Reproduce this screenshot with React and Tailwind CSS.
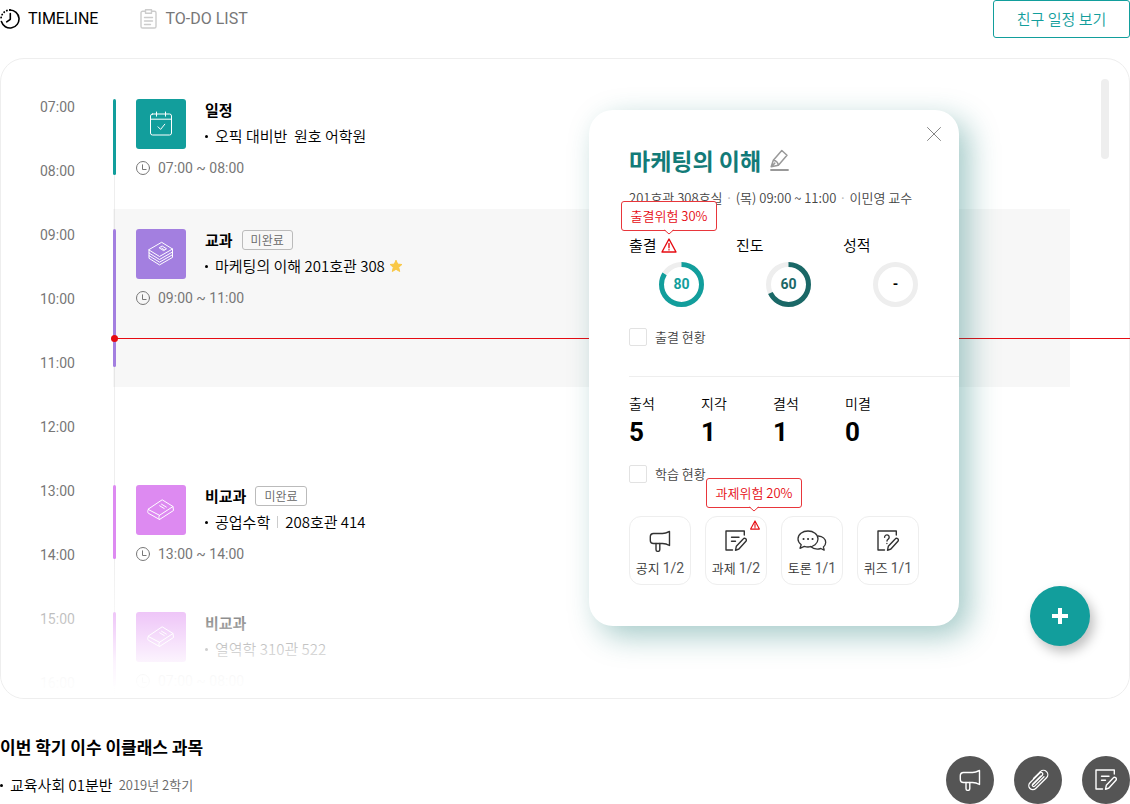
import { useState } from 'react';

const hours = ['07:00', '08:00', '09:00', '10:00', '11:00', '12:00', '13:00', '14:00', '15:00', '16:00'];

const events = [
  { id: 1, type: '일정', icon: CalendarIcon, text: '오픽 대비반\u00a0 원호 어학원', time: '07:00 ~ 08:00', color: 'bg-[#129e9c]', wrap: '', size: 'h-[76px]' },
  { id: 2, type: '교과', icon: BookStackIcon, text: '마케팅의 이해 201호관 308', time: '09:00 ~ 11:00', color: 'bg-[#a37fe0]', wrap: 'mt-[34px] py-5 bg-black/[0.032]', size: 'h-[138px]', badge: '미완료', star: true },
  { id: 3, type: '비교과', icon: BookIcon, text: '공업수학', place: '208호관 414', time: '13:00 ~ 14:00', color: 'bg-[#dd8af1]', wrap: 'mt-[98px]', size: 'h-[74px]', badge: '미완료' },
  { id: 4, type: '비교과', icon: BookIcon, text: '열역학 310관 522', time: '07:00 ~ 08:00', color: 'bg-[#dd8af1]', wrap: 'mt-[53px]', size: 'h-[74px]' },
];

const rings = [
  { label: '출결', value: '80', arc: 84, stroke: '#129e9c', text: 'text-[#129e9c]', warning: '출결위험 30%' },
  { label: '진도', value: '60', arc: 68, stroke: '#1a6867', text: 'text-[#1a6867]' },
  { label: '성적', value: '-', arc: 0, stroke: '#eeeeee', text: 'text-black' },
];

const attendance = [
  { label: '출석', value: 5 },
  { label: '지각', value: 1 },
  { label: '결석', value: 1 },
  { label: '미결', value: 0 },
];

const activities = [
  { label: '공지', count: '1/2', icon: MegaphoneIcon },
  { label: '과제', count: '1/2', icon: NoteIcon, warning: '과제위험 20%' },
  { label: '토론', count: '1/1', icon: ChatIcon },
  { label: '퀴즈', count: '1/1', icon: QuizIcon },
];

/* ---------- icons ---------- */

function Svg({ w, h = w, sw = 1, children, className = '' }) {
  return (
    <svg width={w} height={h} viewBox={`0 0 ${w} ${h}`} fill="none" stroke="currentColor" strokeWidth={sw}
      strokeLinecap="round" strokeLinejoin="round" className={`shrink-0 ${className}`} aria-hidden="true">
      {children}
    </svg>
  );
}

function TimelineIcon() {
  return (
    <Svg w={20} sw={1.6}>
      <path d="M10 1a9 9 0 1 1-8.6 11.6" />
      <path d="M10 1a9 9 0 0 0-9 9" strokeDasharray="0.2 2.9" strokeWidth="1.8" />
      <path d="M10.3 4.5v5.8l-3.6 2.6" />
    </Svg>
  );
}

function TodoIcon() {
  return (
    <Svg w={17} h={20} sw={1.4}>
      <path d="M5 2.2H2.600A1.600 1.600 0 0 0 1 3.800v13.600A1.600 1.600 0 0 0 2.600 19h11.800a1.600 1.600 0 0 0 1.600-1.600V3.800a1.600 1.600 0 0 0-1.600-1.600H12" />
      <path d="M5.500.8h6v3.400h-6zM4.500 8.500h8M4.500 12h8M4.500 15.500h6" />
    </Svg>
  );
}

function CalendarIcon() {
  return (
    <Svg w={24} h={26}>
      <rect x="1.500" y="3" width="21" height="21" rx="2" />
      <path d="M1.500 8.200h21M7.500 1v4.200M16.500 1v4.200M9 15.800l2.600 2.600 4.200-5.200" />
    </Svg>
  );
}

function BookStackIcon() {
  return (
    <Svg w={26} h={26}>
      <path d="M14 1.500 24.500 8 11.500 15.500 1 9z" />
      <path d="M14.500 5.200 18.500 7.800 15.500 9.600 11.500 7z M13.700 7.200l2.600 1.600" />
      <path d="M1 9v3l10.500 6.500L24.500 11V8M1 12v2.700l10.500 6.500 13-7.500V11M1 14.700v2.600l10.500 6.600 13-7.500v-2.700" />
    </Svg>
  );
}

function BookIcon() {
  return (
    <Svg w={28} h={22}>
      <path d="M15.500 1 26 7.500 12.500 16.300 1.300 10.500z" />
      <path d="M1.300 10.500c-.8 1.200-.8 2.700 0 3.700l11.200 6.300L26.500 11.500 26 7.500M12.500 16.300c-.9 1.300-.9 2.800 0 4.200" />
      <path d="M14.500 5.200l4.800 2.900M12.700 6.800l4.500 2.700" />
    </Svg>
  );
}

function ClockIcon() {
  return (
    <Svg w={14}>
      <circle cx="7" cy="7" r="6.500" />
      <path d="M6.500 3.800v4.700h3.600" />
    </Svg>
  );
}

function StarIcon() {
  return (
    <svg width="14" height="14" viewBox="0 0 14 14" fill="#f9c846" stroke="#f9c846" strokeWidth="1" strokeLinejoin="round" aria-hidden="true">
      <path d="M7 1.200l1.700 3.900 4.200.4-3.200 2.800 1 4.200L7 10.300l-3.700 2.200 1-4.200L1.100 5.500l4.200-.4z" />
    </svg>
  );
}

function PencilIcon() {
  return (
    <Svg w={19} h={22} sw={1.500}>
      <path d="M11.800 1.500 17 6.300 8.400 16.300 1.200 17.700 3.300 11.200z M3.300 11.200c2.500.3 4.600 2.200 5.100 5.100M1.200 17.700l3.600-3.600" />
      <path d="M1 21h17" strokeWidth="1.800" />
    </Svg>
  );
}

function CloseIcon() {
  return (
    <Svg w={14} sw={0.8} className="text-[#666]">
      <path d="M.5.5l13 13M13.500.5l-13 13" />
    </Svg>
  );
}

function WarningIcon({ small }) {
  return (
    <svg width={small ? 10 : 16} height={small ? 10 : 15} viewBox="0 0 16 15" fill="none" stroke="#e60b12" strokeWidth={small ? 1.8 : 1.4}
      strokeLinecap="round" strokeLinejoin="round" className="shrink-0" aria-hidden="true">
      <path d="M8 1 15 14H1zM8 5.500v4.200M8 11.600v.3" />
    </svg>
  );
}

function MegaphoneIcon() {
  return (
    <Svg w={22} h={22} sw={1.400}>
      <path d="M4.500 3.500h9c2.500 0 4.500-.8 7-2v14c-2.500-1.500-4.500-2-7-2h-9A3.200 3.200 0 0 1 1.300 10.300V6.700a3.200 3.200 0 0 1 3.200-3.200z" />
      <path d="M7 13.500v6a1.900 1.900 0 0 0 3.800 0v-6" />
    </Svg>
  );
}

function NotePaper() {
  return (
    <>
      <path d="M19.300 5V1H1v19h6.500" />
      <path d="M10.500 20.300l.8-4 6.900-7.400a1.800 1.800 0 0 1 2.700 2.400l-7 7.700z" />
    </>
  );
}

function NoteIcon() {
  return (
    <Svg w={22} h={22} sw={1.400}>
      <NotePaper />
      <path d="M6.500 7.300h7.500M6.500 11.200h4" />
    </Svg>
  );
}

function QuizIcon() {
  return (
    <Svg w={22} h={22} sw={1.400}>
      <NotePaper />
      <path d="M7.600 7.300a2.300 2.300 0 1 1 3.600 1.800c-.8.500-1.200.9-1.200 2M9.900 13.400v.2" />
    </Svg>
  );
}

function ChatIcon() {
  return (
    <Svg w={30} h={22} sw={1.300}>
      <path d="M11 1c5.500 0 10 3.500 10 8s-4.500 8-10 8c-1.300 0-2.500-.2-3.700-.6L3 18.300l1.200-3.600C2.200 13.200 1 11.200 1 9c0-4.500 4.500-8 10-8z" />
      <path d="M21.200 6c4.300.4 7.500 3 7.500 6.400 0 1.700-.9 3.300-2.300 4.500l.8 3.200-3.400-1.600c-4.300 1.200-8 0-10.300-2" />
      <path d="M6.500 9h.1M11 9h.1M15.500 9h.1" strokeWidth="2" />
    </Svg>
  );
}

function ClipIcon() {
  return (
    <Svg w={22} h={22} sw={1.300}>
      <path d="M6 15.500 15.300 6.200a1.600 1.600 0 0 0-2.300-2.300L3 13.800a4 4 0 0 0 5.700 5.700L19.500 8.700a4.300 4.300 0 0 0-6.100-6.100" />
      <path d="M13.400 2.600 6.500 9.500M17 7.800l-9.300 9.300a1.400 1.400 0 0 1-2-2l8-8" />
    </Svg>
  );
}

/* ---------- parts ---------- */

function Tooltip({ children, className }) {
  return (
    <div className={`absolute z-10 flex h-[30px] w-24 items-center justify-center rounded-[3px] border border-[#e8363b] bg-white text-[13px] whitespace-nowrap text-[#e60b12] ${className}`}>
      {children}
      <svg width="10" height="6" viewBox="0 0 10 6" className="absolute top-full left-1/2 -mt-px -translate-x-1/2" aria-hidden="true">
        <path d="M1 0h8v1L5 4.500 1 1z" fill="#fff" />
        <path d="M.5 1 5 5l4.500-4" fill="none" stroke="#e8363b" />
      </svg>
    </div>
  );
}

function EventRow({ event }) {
  const Icon = event.icon;
  return (
    <li className={`-ml-0.5 ${event.wrap}`}>
      <div className={`flex ${event.size}`}>
        <div className={`w-[3px] rounded-sm ${event.color}`} />
        <div className="ml-5">
          <div className="flex gap-[19px]">
            <div className={`flex size-[50px] items-center justify-center rounded-[3px] text-white ${event.color}`}>
              <Icon />
            </div>
            <div>
              <div className="flex h-[22px] items-center gap-[9px]">
                <h3 className="text-[15px] font-bold">{event.type}</h3>
                {event.badge && (
                  <span className="flex h-5 items-center rounded-[3px] border border-[#bbb] px-2 text-[12px] text-[#666]">{event.badge}</span>
                )}
              </div>
              <p className="mt-0.5 flex h-[26px] items-center text-[15px]">
                <span className="mr-[7px] size-[3px] rounded-full bg-black" />
                {event.text}
                {event.place && (
                  <>
                    <span className="mx-[7px] h-3 w-px bg-[#ccc]" />
                    {event.place}
                  </>
                )}
                {event.star && <span className="ml-1"><StarIcon /></span>}
              </p>
            </div>
          </div>
          <p className="mt-[7px] flex h-6 items-center gap-2 font-[Roboto] text-[14px] font-normal text-[#777]">
            <ClockIcon />
            {event.time}
          </p>
        </div>
      </div>
    </li>
  );
}

function Ring({ ring }) {
  return (
    <div className="relative w-[107px]">
      {ring.warning && <Tooltip className="-top-8 -left-2">{ring.warning}</Tooltip>}
      <p className="flex h-6 items-center gap-1 text-[15px]">
        {ring.label}
        {ring.warning && <WarningIcon />}
      </p>
      <div className="relative mt-[5px] ml-[30px] size-[45px]">
        <svg width="45" height="45" viewBox="0 0 45 45" fill="none" strokeWidth="5" className="-rotate-90" aria-hidden="true">
          <circle cx="22.500" cy="22.500" r="20" stroke="#eeeeee" />
          {ring.arc > 0 && <circle cx="22.500" cy="22.500" r="20" stroke={ring.stroke} pathLength="100" strokeDasharray={`${ring.arc} 100`} />}
        </svg>
        <span className={`absolute inset-0 flex items-center justify-center font-[Roboto] text-[14px] font-bold ${ring.text}`}>{ring.value}</span>
      </div>
    </div>
  );
}

function CheckLabel({ id, children }) {
  return (
    <div className="flex h-6 items-center gap-2">
      <input id={id} type="checkbox" className="size-[18px] appearance-none rounded-[2px] border border-[#e2e2e2] bg-white checked:bg-[#129e9c]" />
      <label htmlFor={id} className="text-[13px] leading-6 text-[#444]">{children}</label>
    </div>
  );
}

function CourseModal({ onClose }) {
  return (
    <div className="absolute top-[51px] right-[170px] z-20 w-[370px] rounded-3xl bg-white pt-[34px] pb-[41px] pl-10 shadow-[10px_10px_30px_rgba(15,115,110,0.38)]">
      <button type="button" aria-label="닫기" onClick={onClose} className="absolute top-[17px] right-[18px]">
        <CloseIcon />
      </button>

      <div className="flex h-8 items-center gap-[9px]">
        <h2 className="text-[23px] font-bold text-[#127b78]">마케팅의 이해</h2>
        <button type="button" aria-label="수정" className="text-[#999]">
          <PencilIcon />
        </button>
      </div>
      <p className="mt-[10px] flex h-6 items-center gap-[3px] text-[13px] whitespace-nowrap text-[#444]">
        201호관 308호실<span className="text-[#bbb]">·</span>(목) 09:00 ~ 11:00<span className="text-[#bbb]">·</span>이민영 교수
      </p>

      <div className="mt-[23px] flex">
        {rings.map((ring) => <Ring key={ring.label} ring={ring} />)}
      </div>

      <div className="mt-[18px]">
        <CheckLabel id="attendance">출결 현황</CheckLabel>
      </div>

      <dl className="mt-[27px] flex border-t border-[#eee] pt-[14px]">
        {attendance.map((item) => (
          <div key={item.label} className="w-[72px]">
            <dt className="h-6 text-[14px] leading-6">{item.label}</dt>
            <dd className="mt-px h-8 font-[Roboto] text-[26px] leading-8 font-bold">{item.value}</dd>
          </div>
        ))}
      </dl>

      <div className="mt-[14px]">
        <CheckLabel id="study">학습 현황</CheckLabel>
      </div>

      <div className="mt-[30px] flex gap-[14px]">
        {activities.map((item) => {
          const Icon = item.icon;
          return (
            <div key={item.label} className="relative">
              {item.warning && <Tooltip className="-top-[38px] left-px">{item.warning}</Tooltip>}
              <button type="button" className="flex h-[69px] w-[62px] flex-col items-center rounded-xl border border-[#eee] pt-[13px] text-[13px] whitespace-nowrap text-[#333]">
                <Icon />
                <span className="mt-1 h-6 leading-6">{item.label} <span className="font-[Roboto] text-[14px] font-normal text-[#555]">{item.count}</span></span>
              </button>
              {item.warning && <span className="absolute top-1 right-[7px]"><WarningIcon small /></span>}
            </div>
          );
        })}
      </div>
    </div>
  );
}

export default function App() {
  const [open, setOpen] = useState(true);

  return (
    <div className="bg-white font-['Noto_Sans_CJK_KR','Noto_Sans_CJK_SC',sans-serif] font-[350] text-black">
      <header className="flex h-[38px] items-center justify-between">
        <nav className="flex font-[Roboto] text-[16px] font-normal">
          <a href="#timeline" className="flex items-center gap-2"><TimelineIcon />TIMELINE</a>
          <a href="#todo" className="ml-[42px] flex items-center gap-2 text-[#777]"><span className="text-[#ccc]"><TodoIcon /></span>TO-DO LIST</a>
        </nav>
        <button type="button" className="h-[38px] w-[137px] rounded-[3px] border border-[#129e9c] text-[15px] text-[#129e9c]">친구 일정 보기</button>
      </header>

      <main className="relative mt-5 grid grid-cols-[113px_1fr] rounded-3xl border border-[#eee] pt-[37px] pb-1">
        <ol className="space-y-[42px] pl-[39px] font-[Roboto] text-[14px] leading-[22px] font-normal text-[#777]">
          {hours.map((hour) => <li key={hour}>{hour}</li>)}
        </ol>
        <ul className="mt-[3px] mr-[59px] border-l border-[#eee]">
          {events.map((event) => <EventRow key={event.id} event={event} />)}
        </ul>

        {/* fade out at the bottom of the list */}
        <div className="pointer-events-none absolute inset-x-0 bottom-0 h-[140px] rounded-b-3xl bg-[linear-gradient(to_bottom,rgba(255,255,255,0),rgba(255,255,255,0.5)_38%,rgba(255,255,255,0.9)_74%,rgba(255,255,255,0.98)_90%)]" />

        {/* current time */}
        <div className="absolute top-[279px] -right-px left-[113px] h-px bg-[#e60b12]">
          <span className="absolute -top-[3px] -left-[3px] size-[7px] rounded-full bg-[#e60b12]" />
        </div>

        <div className="absolute top-5 right-5 h-20 w-2 rounded-full bg-[#eee]" />

        {open && <CourseModal onClose={() => setOpen(false)} />}

        <button type="button" aria-label="일정 추가" className="absolute right-[39px] bottom-[52px] flex size-[60px] items-center justify-center rounded-full bg-[#129e9c] text-white shadow-[4px_6px_12px_rgba(0,0,0,0.25)]">
          <svg width="16" height="16" viewBox="0 0 16 16" fill="currentColor" aria-hidden="true">
            <path d="M6 0h4v6h6v4h-6v6H6v-6H0V6h6z" />
          </svg>
        </button>
      </main>

      <footer className="flex items-end justify-between pt-9">
        <section className="pb-[7px]">
          <h2 className="h-6 text-[17px] leading-6 font-bold">이번 학기 이수 이클래스 과목</h2>
          <p className="mt-[14px] flex h-6 items-center text-[15px]">
            <span className="mr-[7px] size-[3px] rounded-full bg-black" />
            교육사회 01분반
            <span className="ml-[6px] text-[13px] text-[#666]">2019년 2학기</span>
          </p>
        </section>
        <div className="flex gap-5 text-white">
          <button type="button" aria-label="공지" className="flex size-12 items-center justify-center rounded-full bg-[#555]"><MegaphoneIcon /></button>
          <button type="button" aria-label="첨부" className="flex size-12 items-center justify-center rounded-full bg-[#555]"><ClipIcon /></button>
          <button type="button" aria-label="과제" className="flex size-12 items-center justify-center rounded-full bg-[#555]"><NoteIcon /></button>
        </div>
      </footer>
    </div>
  );
}
